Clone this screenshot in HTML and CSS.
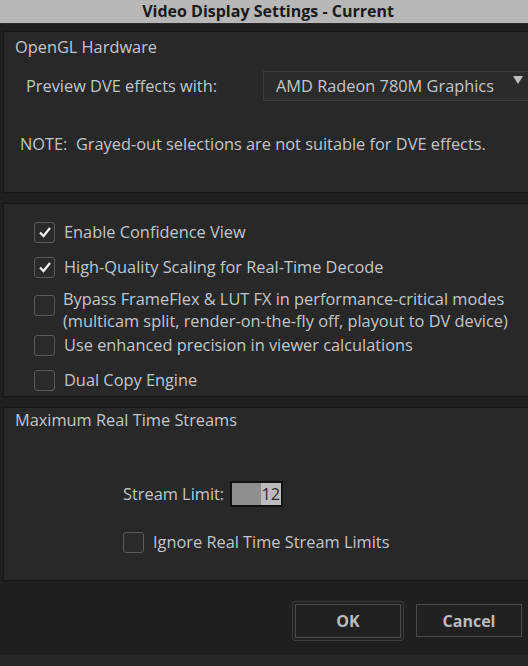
FILE: index.html
```html
<!DOCTYPE html>
<html>
<head>
<meta charset="utf-8">
<link rel="stylesheet" href="styles.css">
</head>
<body>
<div class="window">
  <div class="titlebar">Video Display Settings - Current</div>
  <div class="content">
    <section class="panel panel-gl">
      <div class="panel-title">OpenGL Hardware</div>
      <div class="row-preview">
        <span class="label-preview">Preview DVE effects with:</span>
        <div class="dropdown">
          <span>AMD Radeon 780M Graphics</span>
          <svg class="arrow" width="10" height="8" viewBox="0 0 10 8"><path d="M0 0H10L5 8Z" fill="#bdbdbd"/></svg>
        </div>
      </div>
      <div class="note">NOTE:&nbsp; Grayed-out selections are not suitable for DVE effects.</div>
    </section>

    <section class="panel panel-opts">
      <div class="check-row r1"><span class="cb checked"><svg width="14" height="12" viewBox="0 0 14 12"><path d="M2 6.5 L5.5 10 L12 2" fill="none" stroke="#f2f2f2" stroke-width="2.2"/></svg></span><span class="cl">Enable Confidence View</span></div>
      <div class="check-row r2"><span class="cb checked"><svg width="14" height="12" viewBox="0 0 14 12"><path d="M2 6.5 L5.5 10 L12 2" fill="none" stroke="#f2f2f2" stroke-width="2.2"/></svg></span><span class="cl">High-Quality Scaling for Real-Time Decode</span></div>
      <div class="check-row r3"><span class="cb"></span><span class="cl two">Bypass FrameFlex &amp; LUT FX in performance-critical modes<br>(multicam split, render-on-the-fly off, playout to DV device)</span></div>
      <div class="check-row r4"><span class="cb"></span><span class="cl">Use enhanced precision in viewer calculations</span></div>
      <div class="check-row r5"><span class="cb"></span><span class="cl">Dual Copy Engine</span></div>
    </section>

    <section class="panel panel-streams">
      <div class="panel-title">Maximum Real Time Streams</div>
      <div class="stream-row">
        <span class="cl">Stream Limit:</span>
        <div class="spin"><span class="spin-left"></span><span class="spin-val">12</span></div>
      </div>
      <div class="check-row ignore"><span class="cb"></span><span class="cl">Ignore Real Time Stream Limits</span></div>
    </section>
  </div>
  <div class="footer">
    <button class="btn btn-ok"><span>OK</span></button>
    <button class="btn btn-cancel">Cancel</button>
  </div>
  <div class="bottom-strip"></div>
</div>
</body>
</html>
```
FILE: styles.css
```css
* { box-sizing: border-box; }
html, body { margin: 0; padding: 0; }
body {
  width: 528px;
  height: 666px;
  overflow: hidden;
  background: #1e1e1e;
  font-family: "Open Sans", "Noto Sans", sans-serif;
  font-size: 16.35px;
  color: #c3c6c9;
}
.window { display: flex; flex-direction: column; height: 666px; }
.titlebar {
  height: 24px;
  background: #b7b7b7;
  border-bottom: 1px solid #2a2a2a;
  color: #1a1a1a;
  font-weight: 700;
  font-size: 16px;
  line-height: 23px;
  text-align: center;
  padding-left: 8px;
}
.content {
  display: flex;
  flex-direction: column;
  gap: 10px;
  padding: 7px 0 0 3px;
  background: #1e1e1e;
}
.panel {
  background: #282828;
  border: 1px solid #171717;
  margin-right: -20px;
  position: relative;
}
.panel-gl { height: 162px; padding: 4px 0 0 11px; }
.panel-title { line-height: 22px; }
.row-preview {
  display: flex;
  align-items: center;
  margin-top: 13px;
  padding-left: 11px;
}
.label-preview { width: 237px; }
.dropdown {
  width: 280px;
  height: 30px;
  background: #2b2b2b;
  border: 1px solid #3c3c3c;
  display: flex;
  align-items: center;
  padding-left: 12px;
  position: relative;
}
.arrow { position: absolute; left: 249px; top: 4px; }
.note { margin-top: 32px; padding-left: 5px; line-height: 22px; }

.panel-opts {
  height: 194px;
  padding: 17px 0 0 30px;
  display: flex;
  flex-direction: column;
}
.check-row { display: flex; align-items: center; }
.cb {
  width: 21px;
  height: 21px;
  border: 1px solid #5a5a5a;
  border-radius: 3px;
  background: #2b2b2b;
  display: flex;
  align-items: center;
  justify-content: center;
  flex: none;
}
.cl { margin-left: 9px; line-height: 22px; }
.r2 { margin-top: 13px; }
.r3 { margin-top: 10px; }
.r3 .cb { margin-top: -10px; }
.r3 .cl { margin-left: 8px; }
.r4 { margin-top: 2px; }
.r5 { margin-top: 13px; }

.panel-streams { height: 174px; padding: 1px 0 0 11px; }
.stream-row {
  display: flex;
  align-items: center;
  margin-top: 50px;
  padding-left: 108px;
}
.stream-row .cl { margin-left: 0; margin-right: 6px; }
.spin {
  width: 53px;
  height: 26px;
  border: 2px solid #111;
  display: flex;
  background: #8e8e8e;
}
.spin-left { flex: 1; }
.spin-val {
  width: 20px;
  background: #bcbcbc;
  color: #2b2b2b;
  line-height: 22px;
  text-align: right;
  padding-right: 1px;
}
.ignore { margin-top: 24px; padding-left: 108px; }
.ignore .cl { margin-left: 9px; }

.footer {
  flex: 1;
  display: flex;
  justify-content: flex-end;
  align-items: flex-start;
  gap: 12px;
  padding: 20px 6px 0 0;
  background: #1f1f1f;
}
.btn {
  font-family: inherit;
  font-weight: 700;
  font-size: 16px;
  color: #b9bcbf;
  background: #212121;
  cursor: default;
}
.btn-ok {
  width: 112px;
  height: 40px;
  border: 1px solid #3d3d3d;
  border-radius: 3px;
  padding: 2px;
  display: flex;
}
.btn-ok span {
  flex: 1;
  border: 1px solid #4a4a4a;
  display: flex;
  align-items: center;
  justify-content: center;
}
.btn-cancel {
  width: 106px;
  height: 33px;
  margin-top: 3px;
  border: 1px solid #4a4a4a;
  padding: 0;
}
.bottom-strip { height: 11px; background: #262626; }
```
